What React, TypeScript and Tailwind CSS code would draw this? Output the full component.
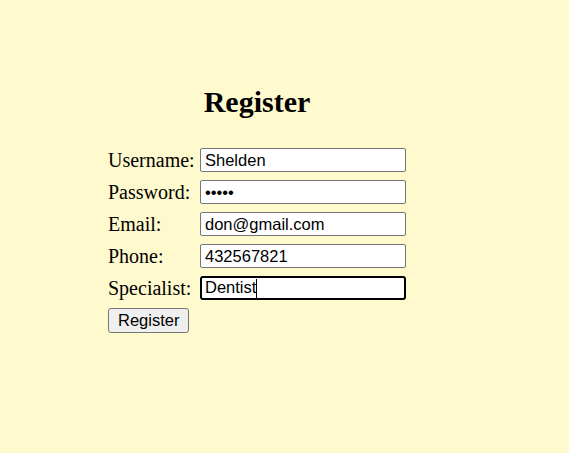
import { FC } from "react";

const fields = [
  { label: "Username:", value: "Shelden", type: "text" },
  { label: "Password:", value: "Shelden", type: "password" },
  { label: "Email:", value: "don@gmail.com", type: "text" },
  { label: "Phone:", value: "432567821", type: "text" },
];

const App: FC = () => {
  return (
    <div className="min-h-screen w-full bg-[#fffacd] font-['Liberation_Serif',serif] text-black">
      {/* Form block */}
      <div className="ml-[108px] w-[298px] pt-[82px]">
        <h2 className="text-center text-[30px] font-bold leading-[40px]">Register</h2>

        <div className="mt-[26px] flex flex-col gap-2">
          {fields.map((f) => (
            <div key={f.label} className="flex h-6 items-center">
              <label className="w-[92px] text-[20px] leading-[26px]">{f.label}</label>
              <input
                type={f.type}
                defaultValue={f.type === "password" ? "12345" : f.value}
                className="h-6 w-[206px] rounded-[2px] border border-[#767676] bg-white px-[4px] font-['Liberation_Sans',sans-serif] text-[16.5px] outline-none"
              />
            </div>
          ))}

          {/* Focused field */}
          <div className="flex h-6 items-center">
            <label className="w-[92px] text-[20px] leading-[26px]">Specialist:</label>
            <div className="relative">
              <input
                type="text"
                defaultValue="Dentist"
                className="h-6 w-[206px] rounded-[3px] border-2 border-black bg-white px-[3px] font-['Liberation_Sans',sans-serif] text-[16.5px] outline-none"
              />
              <span className="absolute left-[56px] top-[3px] h-[19px] w-px bg-black" />
            </div>
          </div>

          <div>
            <button className="h-[25px] rounded-[3px] border border-[#767676] bg-[#efefef] px-[9px] font-['Liberation_Sans',sans-serif] text-[16.5px] leading-none">
              Register
            </button>
          </div>
        </div>
      </div>
    </div>
  );
};

export default App;
